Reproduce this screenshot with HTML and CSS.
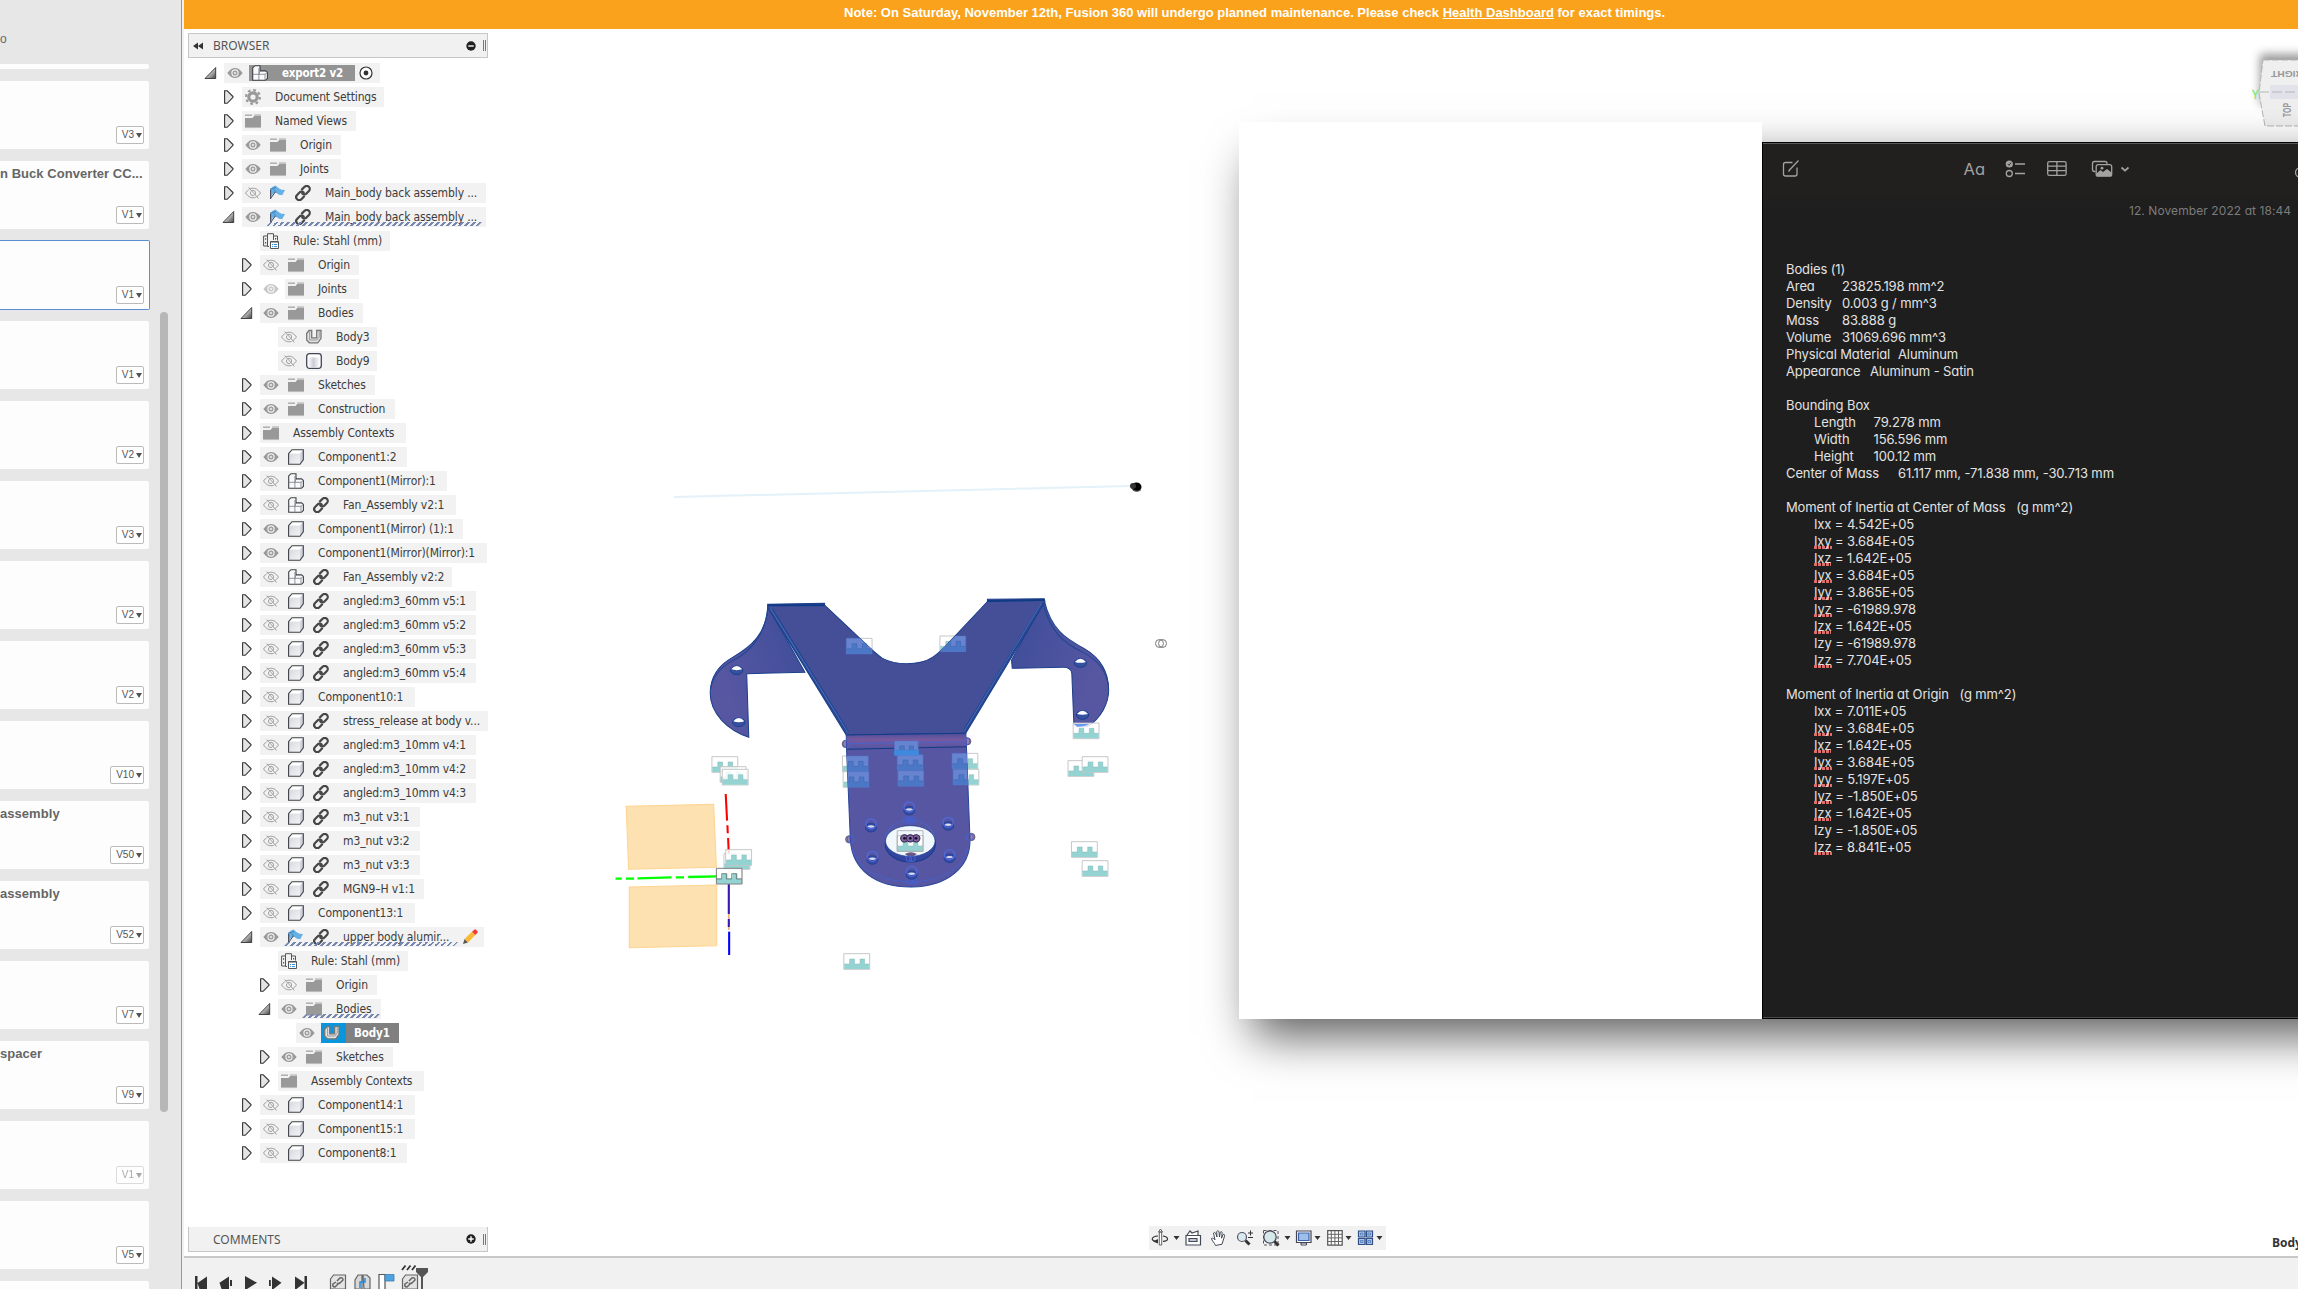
FILE: index.html
```html
<!DOCTYPE html>
<html lang="en">
<head>
<meta charset="utf-8">
<title>Fusion 360</title>
<link rel="stylesheet" href="styles.css">
</head>
<body>
<svg class="defs" width="0" height="0">
  <defs>
    <linearGradient id="gOpen" x1="0" y1="0" x2="1" y2="1"><stop offset="0.3" stop-color="#eee"/><stop offset="1" stop-color="#444"/></linearGradient>
    <linearGradient id="gMetal" x1="0" y1="0" x2="1" y2="0"><stop offset="0" stop-color="#fff"/><stop offset=".45" stop-color="#c9cdd8"/><stop offset="1" stop-color="#fff"/></linearGradient>
    <linearGradient id="gFace" x1="0" y1="0" x2="1" y2="1"><stop offset="0" stop-color="#d7d9de"/><stop offset="1" stop-color="#f3f4f6"/></linearGradient>
  </defs>
  <symbol id="closed" viewBox="0 0 16 16"><path d="M.6 1.800h2.600l5.800 5.700v.8l-5.800 6H.6z" fill="#e4e4e4" stroke="#333" stroke-width="1.1"/></symbol>
  <symbol id="open" viewBox="0 0 16 16" overflow="visible"><path d="M9.700 2.500v11H-1z" fill="url(#gOpen)" stroke="#333" stroke-width=".9"/></symbol>
  <symbol id="eye" viewBox="0 0 16 16"><path d="M.3 8C3 4.300 5.500 3 8 3s5 1.300 7.700 5C13 11.700 10.500 13 8 13S3 11.700.3 8z" fill="#999"/><circle cx="8" cy="8" r="3.100" fill="none" stroke="#f1f1f1" stroke-width="1.200"/><circle cx="8" cy="8" r="1.300" fill="#ddd"/></symbol>
  <symbol id="off" viewBox="0 0 16 16"><path d="M.5 8C3 4.500 5.500 3.200 8 3.200s5 1.300 7.500 4.800C13 11.500 10.500 12.800 8 12.800S3 11.500.5 8zM3.500 2.500l10 11" fill="none" stroke="#a0a0a0"/><circle cx="8" cy="8" r="2.600" fill="none" stroke="#a0a0a0"/><path d="M2.500 2.800l10 11" stroke="#f2f2f2" stroke-width=".8"/></symbol>
  <symbol id="folder" viewBox="0 0 16 16"><path d="M0 5h7.500l2-2.500H16V15H0z" fill="#999"/><path d="M0 2.200h7" stroke="#aaa" stroke-width="1.400"/><path d="M9 1.600h7M0 14.600h16" stroke="#c4c4c4" stroke-width=".9"/></symbol>
  <symbol id="gear" viewBox="0 0 16 16"><circle cx="8" cy="8" r="4.200" fill="none" stroke="#999" stroke-width="3.200"/><circle cx="8" cy="8" r="6.900" fill="none" stroke="#999" stroke-width="2.200" stroke-dasharray="2.700 2.720"/></symbol>
  <symbol id="box" viewBox="0 0 16 16"><path d="M.6 4.500L4 .7h11.300v10.200L12 15.300H.6z" fill="#fff"/><path d="M.8 4.600H12v10.500H.8z" fill="url(#gFace)"/><path d="M12 4.600L15.300.8v10L12 15.200z" fill="#d0d2dc"/><path d="M.6 4.700L4 .7h11.300v10.200L12 15.300H.6z" fill="none" stroke="#3f4046" stroke-width="1.100"/></symbol>
  <symbol id="asm" viewBox="0 0 16 16"><path d="M.7 2.800L3 .7h5v5.200h5.500l1.900 1.500v6l-2.100 1.900H.7z" fill="#fafafb" stroke="#3f4046" stroke-width="1.100"/><path d="M.7 9.300h6.200v6M8 5.900L6.900 9.300H13l2.400-1.900M13 9.300v6M6.900 9.300V3" fill="none" stroke="#777b86" stroke-width=".8"/></symbol>
  <symbol id="link" viewBox="0 0 16 16"><g fill="none" stroke="#464646" stroke-width="2.200" stroke-linecap="round"><path d="M7 4.400l2.600-2.600a2.900 2.900 0 0 1 4.300 4.200L11.500 8.400a2.800 2.800 0 0 1-4.200 0"/><path d="M9 11.500l-2.600 2.700a2.900 2.900 0 0 1-4.300-4.200l2.400-2.400a2.800 2.800 0 0 1 4.200 0"/></g></symbol>
  <symbol id="sheet" viewBox="0 0 16 16"><path d="M0 4.200L3 1.500l2.500-.9 3.300 2.600 2.700 1.500 3.500.2-2.800 5.300-3.300-.5L6 7.500 2.700 9 .8 12.500z" fill="#67b0e6"/><path d="M0 4.200l6-1.600M6 7.500L3.500 4.600" stroke="#3f7fb4" fill="none"/><path d="M.6 14V5M.6 13.500L5.300 7" fill="none" stroke="#445" stroke-width="1"/></symbol>
  <symbol id="rule" viewBox="0 0 16 16"><g fill="none" stroke="#555" stroke-width="1"><path d="M6 13.500H4.500V13H.6V3h3.900V.7h6V3h4v4.500M4.500 3v10M10.500 3v4"/><path d="M2.600 5.200v1.600M2.600 9v1.600M12.600 5v1.500" stroke-width="1.200"/></g><path d="M7.500 8.500h8v7h-8z" fill="#fff" stroke="#555"/><path d="M7.500 9h8" stroke="#555"/><path d="M9 11.500h1.200m.9 0h3M9 13.600h1.200m.9 0h3" stroke="#2a8be0"/></symbol>
  <symbol id="cyl" viewBox="0 0 16 16"><rect x=".7" y=".7" width="14.600" height="14.600" rx="2.800" fill="#fff" stroke="#3f4656" stroke-width="1.300"/><path d="M2 4.500h12v9.800H2z" fill="url(#gMetal)"/></symbol>
  <symbol id="ubody" viewBox="0 0 16 16"><path d="M.7 4.500L3 1.500h2.700v7.300h5V1.500H15v7.800l-3.300 4.500H3.300L.7 11z" fill="#e3e3e3" stroke="#777" stroke-width="1.300"/><path d="M3.600 2.500v8.500h7.200l2.400-3V2.500" fill="none" stroke="#999" stroke-width="1"/></symbol>
  <symbol id="pencil" viewBox="0 0 16 16"><path d="M1 15l1.500-5L6 13.500z" fill="#555"/><path d="M2.500 10L10 2.800l3.300 3.300L6 13.500z" fill="#fbb735"/><path d="M10 2.800L12 .9a1.500 1.500 0 0 1 2.200 0l1 1a1.500 1.500 0 0 1 0 2.200l-1.900 2z" fill="#f23b3b"/></symbol>
  <symbol id="jt" viewBox="0 0 78 50" overflow="visible"><path d="M1 1h75v47H1z" fill="#fff" fill-opacity=".85" stroke="#bcbcbc" stroke-width="2.500"/><path d="M2 47V32h16V17h14v15h16V17h13v15h14v15z" fill="#94d3d2"/><path d="M2 32h16V17h14v15h16V17h13v15h14" fill="none" stroke="#83b9ba" stroke-width="1.500"/></symbol>
  <symbol id="jb" viewBox="0 0 78 50" overflow="visible"><path d="M1 1h75v47H1z" fill="#6684cf" stroke="#5475c6" stroke-width="1.500"/><path d="M2 47V32h16V17h14v15h16V17h13v15h14v15z" fill="#4a78c6"/><path d="M2 32h16V17h14v15h16V17h13v15h14" fill="none" stroke="#3d62ab" stroke-width="1.500"/></symbol>
  <symbol id="hole" viewBox="0 0 36 46" overflow="visible"><ellipse cx="18" cy="28" rx="16" ry="13" fill="#344aa5" stroke="#173f91" stroke-width="2"/><path d="M7 25a12 7 0 0 1 22 0q-11 6-22 0" fill="#d8dcef"/><circle cx="18" cy="17" r="15" fill="none" stroke="#5169da" stroke-width="4"/></symbol>
  <symbol id="whole" viewBox="0 0 40 32" overflow="visible"><ellipse cx="20" cy="17" rx="18" ry="13" fill="#35509f" stroke="#123c8c" stroke-width="2.500"/><path d="M4 14q16-20 32 0-16 5-32 0" fill="#fff"/></symbol>
</svg>

<aside class="data-panel">
  <p class="crumb">o</p>
  <div class="cards">
    <div class="card stub"></div>
    <div class="card"><button class="ver">V3</button></div>
    <div class="card"><h3>n Buck Converter CC...</h3><button class="ver">V1</button></div>
    <div class="card picked"><button class="ver">V1</button></div>
    <div class="card"><button class="ver">V1</button></div>
    <div class="card"><button class="ver">V2</button></div>
    <div class="card"><button class="ver">V3</button></div>
    <div class="card"><button class="ver">V2</button></div>
    <div class="card"><button class="ver">V2</button></div>
    <div class="card"><button class="ver">V10</button></div>
    <div class="card"><h3>assembly</h3><button class="ver">V50</button></div>
    <div class="card"><h3>assembly</h3><button class="ver">V52</button></div>
    <div class="card"><button class="ver">V7</button></div>
    <div class="card"><h3>spacer</h3><button class="ver">V9</button></div>
    <div class="card"><button class="ver faded">V1</button></div>
    <div class="card"><button class="ver">V5</button></div>
    <div class="card"></div>
  </div>
  <div class="scroll-thumb"></div>
</aside>

<main class="work">
  <div class="banner"><span>Note: On Saturday, November 12th, Fusion 360 will undergo planned maintenance. Please check <a>Health Dashboard</a> for exact timings.</span></div>

  <div class="stage">
    <svg class="scene" viewBox="184 29 2114 1227">
      <defs>
        <clipPath id="bodyClip"><path d="M487 103l165-3v5l118 115q30 30 50 45 30 16 70 16 50-1 75-19 15-9 37-32L1125 95v-7l165-2 2 9-230 395 2 40 10 270c6 90-64 150-169 151S732 900 727 810L716 540l-1-45L489 115z"/></clipPath>
        <linearGradient id="fold" x1="0" y1="0" x2="0" y2="1"><stop offset="0" stop-color="#49509b"/><stop offset=".4" stop-color="#77599f"/><stop offset="1" stop-color="#5256a4"/></linearGradient>
        <linearGradient id="wl" x1="0" y1="1" x2="1" y2=".6"><stop offset=".3" stop-color="#5656a1"/><stop offset="1" stop-color="#424f9b"/></linearGradient>
        <linearGradient id="wr" x1="1" y1="1" x2="0" y2=".6"><stop offset=".3" stop-color="#5656a1"/><stop offset="1" stop-color="#424f9b"/></linearGradient>
        <filter id="soft" x="-50%" y="-50%" width="200%" height="200%"><feGaussianBlur stdDeviation="5"/></filter>
      </defs>
      <path d="M674 497l456-11" stroke="#e3f1fb" stroke-width="2"/>
      <ellipse cx="1136.500" cy="487" rx="5" ry="4.500" fill="#000"/><circle cx="1133" cy="486" r="3" fill="#333"/><path d="M1132 489q4 4 9 1" fill="none" stroke="#777"/>
      <g fill="none" stroke="#777"><circle cx="1159.500" cy="643.500" r="4"/><circle cx="1162.500" cy="643.500" r="4"/></g>

      <g transform="translate(600 570) scale(.34439 .33333)">
        <g fill="#fee1b0" stroke="#fdd491" stroke-width="3"><path d="M76 709l254-6 8 189-255 6z"/><path d="M85 951l254-6v182l-254 6z"/></g>
        <g fill="none" stroke-width="6"><path d="M374 840v240" stroke="#e8b27c" stroke-width="5"/><path d="M365 672l4 80m1 14l1 24m1 14l2 50" stroke="#f00"/><path d="M45 926h18m12 0h24m10-1l99-3m12 0h24m12-1l85-2" stroke="#0f0" stroke-width="7"/><path d="M374 942v90m0 15v24" stroke="#3a16b0"/><path d="M375 1085v70" stroke="#00f"/></g>

        <use href="#jt" x="324" y="559" width="78" height="50"/>
        <use href="#jt" x="348" y="589" width="78" height="50"/><use href="#jt" x="354" y="597" width="78" height="50"/>
        <use href="#jt" x="1358" y="571" width="78" height="50"/><use href="#jt" x="1399" y="559" width="78" height="50"/>
        <use href="#jt" x="1368" y="814" width="78" height="50"/><use href="#jt" x="1399" y="871" width="78" height="50"/>
        <use href="#jt" x="707" y="1150" width="78" height="50"/>
        <use href="#jt" x="359" y="850" width="78" height="50"/><use href="#jt" x="364" y="838" width="78" height="50"/>
        <use href="#jt" x="337" y="894" width="78" height="50"/><path d="M338 895h74v47h-74zM338 927h15v-16h14v16h15v-16h14v16h15" fill="none" stroke="#444" stroke-width="2" opacity=".75"/>
        <use href="#jt" x="703" y="557" width="78" height="50"/><use href="#jt" x="705" y="604" width="78" height="50"/>
        <use href="#jt" x="1021" y="549" width="78" height="50"/><use href="#jt" x="1024" y="597" width="78" height="50"/>
        <use href="#jt" x="714" y="204" width="78" height="50"/><use href="#jt" x="986" y="197" width="78" height="50"/>
        <g fill="#9c7fb5" stroke="#444" stroke-width="2"><circle cx="714" cy="522" r="11"/><circle cx="1066" cy="514" r="11"/><circle cx="724" cy="808" r="11"/><circle cx="1078" cy="801" r="11"/></g>

        <path d="M487 108l108 199-169 4 6 191C370 480 320 430 320 370c0-50 25-85 65-108C440 230 484 190 487 108z" fill="url(#wl)" stroke="#1d3f8c" stroke-width="3"/>
        <path d="M488 112C480 190 440 245 385 272c-35 20-58 50-64 85" fill="none" stroke="#1f4692" stroke-width="3"/>
        <path d="M1290 92c20 85 60 113 115 143 45 27 72 65 72 125 0 40-22 85-62 110h-30l-9-8-6-152q-2-18-25-18l-148 3-2-25z" fill="url(#wr)" stroke="#1d3f8c" stroke-width="3"/>
        <path d="M1286 100c22 85 60 120 117 147 45 25 68 58 73 100" fill="none" stroke="#1f4692" stroke-width="3"/>
        <path d="M487 103l165-3v5l118 115q30 30 50 45 30 16 70 16 50-1 75-19 15-9 37-32L1125 95v-7l165-2 2 9-230 395-347 5L489 115z" fill="#444f98" stroke="#1d3f8c" stroke-width="3"/>
        <path d="M490 116L716 488M500 116L722 486M1286 98L1060 486M1278 106L1056 480" fill="none" stroke="#174590" stroke-width="3"/><path d="M495 116L719 486M1282 100L1058 482" stroke="#4668b3" stroke-width="3"/>
        <path d="M487 106h165M1125 93l165-3" stroke="#0f3a85" stroke-width="6"/>
        <path d="M715 495l347-5 2 40 10 270c6 90-64 150-169 151S732 900 727 810l-11-270z" fill="#5656a2" stroke="#2a479c" stroke-width="3"/>
        <path d="M716 495l347-5 1 40-347 7z" fill="url(#fold)"/><path d="M715 495l348-5M718 538l346-8" stroke="#123b83" stroke-width="3"/><path d="M718 521l346-6" stroke="#4b63c8" stroke-width="3"/>
        <path d="M732 835c20 70 90 101 173 100s150-35 165-110" fill="none" stroke="#4860c4" stroke-width="3"/>
        <g fill="none" stroke="#4b63c8" stroke-width="3"><circle cx="716" cy="521" r="10"/><circle cx="1064" cy="514" r="10"/><circle cx="728" cy="808" r="10"/><circle cx="1074" cy="801" r="10"/></g>
        <g clip-path="url(#bodyClip)">
          <use href="#jb" x="703" y="557" width="78" height="50"/><use href="#jb" x="705" y="604" width="78" height="50"/>
          <use href="#jb" x="1021" y="549" width="78" height="50"/><use href="#jb" x="1024" y="597" width="78" height="50"/>
          <use href="#jb" x="714" y="204" width="78" height="50"/><use href="#jb" x="986" y="197" width="78" height="50"/>
          <use href="#jb" x="862" y="553" width="78" height="50"/><use href="#jb" x="864" y="601" width="78" height="50"/>
          <use href="#jb" x="852" y="512" width="76" height="46"/><path d="M854 541h72v15h-72z" fill="#3d8ade"/>
        </g>
        <ellipse cx="901" cy="822" rx="73" ry="54" fill="#33469f" stroke="#1b3b8c" stroke-width="3"/>
        <ellipse cx="901" cy="813" rx="72" ry="46" fill="#f0f8fd" stroke="#1b3b8c" stroke-width="2"/>
        <path d="M828 800c10-30 35-50 72-50s62 20 72 50" fill="none" stroke="#4b63c8" stroke-width="3"/>
        <use href="#jt" x="862" y="796" width="78" height="50"/><path d="M863 782h75v62h-75z" fill="none" stroke="#9a9a9a" stroke-width="2"/>
        <g fill="#8463a8" stroke="#2b2340" stroke-width="3"><circle cx="884" cy="805" r="11"/><circle cx="918" cy="805" r="11"/><circle cx="901" cy="805" r="11"/></g><g fill="#15101f"><circle cx="884" cy="805" r="4"/><circle cx="901" cy="805" r="4"/><circle cx="918" cy="805" r="4"/></g>
        <path d="M885 852q18-10 35 0l-8 6h-18z" fill="#6b5880"/>
        <g fill="none" stroke="#4560d0" stroke-width="3"><circle cx="889" cy="750" r="9"/><circle cx="899" cy="750" r="9"/><circle cx="909" cy="750" r="9"/><circle cx="897" cy="866" r="8"/><circle cx="907" cy="866" r="8"/><circle cx="899" cy="933" r="9"/><circle cx="912" cy="933" r="9"/></g>
        <use href="#hole" x="880" y="694" width="36" height="46"/><use href="#hole" x="769" y="745" width="36" height="46"/><use href="#hole" x="993" y="740" width="36" height="46"/><use href="#hole" x="773" y="842" width="36" height="46"/><use href="#hole" x="997" y="837" width="36" height="46"/><use href="#hole" x="887" y="887" width="36" height="46"/>
        <use href="#whole" x="377" y="284" width="40" height="32"/><use href="#whole" x="383" y="440" width="40" height="32"/><use href="#whole" x="1375" y="262" width="40" height="32"/><use href="#whole" x="1381" y="418" width="40" height="32"/>
        <use href="#jt" x="1373" y="458" width="78" height="50"/><path d="M1376 462h44q-12 8-34 8z" fill="#6a9af0"/>
      </g>

      <g class="cube">
        <path d="M2260 54h60v50h-60z" fill="#777" filter="url(#soft)" opacity=".75"/>
        <path d="M2263 60h40v66h-38l-6-33z" fill="#efefef" stroke="#b5b5b5" stroke-dasharray="7 2"/>
        <path d="M2270 85h30v14h-30z" fill="#e2e3ea"/><path d="M2259 92h39" stroke="#b5b5b5" stroke-dasharray="10 3"/>
        <text transform="translate(2303 71) rotate(180)" font-size="9.500" textLength="32" lengthAdjust="spacingAndGlyphs">RIGHT</text>
        <text transform="translate(2291 117) rotate(-90)" font-size="11" textLength="14" lengthAdjust="spacingAndGlyphs">TOP</text>
        <text x="2252" y="99" class="axis" textLength="6.500" lengthAdjust="spacingAndGlyphs">Y</text>
      </g>
    </svg>

    <section class="palette">
      <header class="bar"><svg class="rew" viewBox="0 0 10 8"><path d="M5 .5v7L0 4zM10 .5v7L5 4z" fill="#333"/></svg><span class="bar-title">BROWSER</span><svg class="round" viewBox="0 0 10 10"><circle cx="5" cy="5" r="4.700" fill="#222"/><path d="M2.300 5h5.400" stroke="#fff" stroke-width="1.400"/></svg><i class="grip"></i></header>
      <ul class="tree">
        <li class="l0"><svg><use href="#open"/></svg><div class="pill w156"><svg><use href="#eye"/></svg><span class="root"><svg><use href="#asm"/></svg><b>export2 v2</b></span><svg class="radio" viewBox="0 0 14 14"><circle cx="7" cy="7" r="6" fill="#fff" stroke="#333" stroke-width="1.200"/><circle cx="7" cy="7" r="2.400" fill="#333"/></svg></div></li>
        <li class="l1"><svg><use href="#closed"/></svg><div class="pill w142"><svg><use href="#gear"/></svg><span>Document Settings</span></div></li>
        <li class="l1"><svg><use href="#closed"/></svg><div class="pill w114"><svg><use href="#folder"/></svg><span>Named Views</span></div></li>
        <li class="l1"><svg><use href="#closed"/></svg><div class="pill w99"><svg><use href="#eye"/></svg><svg><use href="#folder"/></svg><span>Origin</span></div></li>
        <li class="l1"><svg><use href="#closed"/></svg><div class="pill w99"><svg><use href="#eye"/></svg><svg><use href="#folder"/></svg><span>Joints</span></div></li>
        <li class="l1"><svg><use href="#closed"/></svg><div class="pill w244"><svg><use href="#off"/></svg><svg><use href="#sheet"/></svg><svg><use href="#link"/></svg><span>Main_body back assembly ...</span></div></li>
        <li class="l1"><svg><use href="#open"/></svg><div class="pill w244 hatch"><svg><use href="#eye"/></svg><svg><use href="#sheet"/></svg><svg><use href="#link"/></svg><span>Main_body back assembly ...</span></div></li>
        <li class="l2"><svg></svg><div class="pill w130"><svg><use href="#rule"/></svg><span>Rule: Stahl (mm)</span></div></li>
        <li class="l2"><svg><use href="#closed"/></svg><div class="pill w99"><svg><use href="#off"/></svg><svg><use href="#folder"/></svg><span>Origin</span></div></li>
        <li class="l2"><svg><use href="#closed"/></svg><div class="pill w99 dim"><svg><use href="#eye"/></svg><svg><use href="#folder"/></svg><span>Joints</span></div></li>
        <li class="l2"><svg><use href="#open"/></svg><div class="pill w103"><svg><use href="#eye"/></svg><svg><use href="#folder"/></svg><span>Bodies</span></div></li>
        <li class="l3"><svg></svg><div class="pill w99"><svg><use href="#off"/></svg><svg><use href="#ubody"/></svg><span>Body3</span></div></li>
        <li class="l3"><svg></svg><div class="pill w99"><svg><use href="#off"/></svg><svg><use href="#cyl"/></svg><span>Body9</span></div></li>
        <li class="l2"><svg><use href="#closed"/></svg><div class="pill w115"><svg><use href="#eye"/></svg><svg><use href="#folder"/></svg><span>Sketches</span></div></li>
        <li class="l2"><svg><use href="#closed"/></svg><div class="pill w135"><svg><use href="#eye"/></svg><svg><use href="#folder"/></svg><span>Construction</span></div></li>
        <li class="l2"><svg><use href="#closed"/></svg><div class="pill w146"><svg><use href="#folder"/></svg><span>Assembly Contexts</span></div></li>
        <li class="l2"><svg><use href="#closed"/></svg><div class="pill w147"><svg><use href="#eye"/></svg><svg><use href="#box"/></svg><span>Component1:2</span></div></li>
        <li class="l2"><svg><use href="#closed"/></svg><div class="pill w187"><svg><use href="#off"/></svg><svg><use href="#asm"/></svg><span>Component1(Mirror):1</span></div></li>
        <li class="l2"><svg><use href="#closed"/></svg><div class="pill w196"><svg><use href="#off"/></svg><svg><use href="#asm"/></svg><svg><use href="#link"/></svg><span>Fan_Assembly v2:1</span></div></li>
        <li class="l2"><svg><use href="#closed"/></svg><div class="pill w203"><svg><use href="#eye"/></svg><svg><use href="#box"/></svg><span>Component1(Mirror) (1):1</span></div></li>
        <li class="l2"><svg><use href="#closed"/></svg><div class="pill w227"><svg><use href="#eye"/></svg><svg><use href="#box"/></svg><span>Component1(Mirror)(Mirror):1</span></div></li>
        <li class="l2"><svg><use href="#closed"/></svg><div class="pill w192"><svg><use href="#off"/></svg><svg><use href="#asm"/></svg><svg><use href="#link"/></svg><span>Fan_Assembly v2:2</span></div></li>
        <li class="l2"><svg><use href="#closed"/></svg><div class="pill w216"><svg><use href="#off"/></svg><svg><use href="#box"/></svg><svg><use href="#link"/></svg><span>angled:m3_60mm v5:1</span></div></li>
        <li class="l2"><svg><use href="#closed"/></svg><div class="pill w216"><svg><use href="#off"/></svg><svg><use href="#box"/></svg><svg><use href="#link"/></svg><span>angled:m3_60mm v5:2</span></div></li>
        <li class="l2"><svg><use href="#closed"/></svg><div class="pill w216"><svg><use href="#off"/></svg><svg><use href="#box"/></svg><svg><use href="#link"/></svg><span>angled:m3_60mm v5:3</span></div></li>
        <li class="l2"><svg><use href="#closed"/></svg><div class="pill w216"><svg><use href="#off"/></svg><svg><use href="#box"/></svg><svg><use href="#link"/></svg><span>angled:m3_60mm v5:4</span></div></li>
        <li class="l2"><svg><use href="#closed"/></svg><div class="pill w155"><svg><use href="#off"/></svg><svg><use href="#box"/></svg><span>Component10:1</span></div></li>
        <li class="l2"><svg><use href="#closed"/></svg><div class="pill w228"><svg><use href="#off"/></svg><svg><use href="#box"/></svg><svg><use href="#link"/></svg><span>stress_release at body v...</span></div></li>
        <li class="l2"><svg><use href="#closed"/></svg><div class="pill w216"><svg><use href="#off"/></svg><svg><use href="#box"/></svg><svg><use href="#link"/></svg><span>angled:m3_10mm v4:1</span></div></li>
        <li class="l2"><svg><use href="#closed"/></svg><div class="pill w216"><svg><use href="#off"/></svg><svg><use href="#box"/></svg><svg><use href="#link"/></svg><span>angled:m3_10mm v4:2</span></div></li>
        <li class="l2"><svg><use href="#closed"/></svg><div class="pill w216"><svg><use href="#off"/></svg><svg><use href="#box"/></svg><svg><use href="#link"/></svg><span>angled:m3_10mm v4:3</span></div></li>
        <li class="l2"><svg><use href="#closed"/></svg><div class="pill w160"><svg><use href="#off"/></svg><svg><use href="#box"/></svg><svg><use href="#link"/></svg><span>m3_nut v3:1</span></div></li>
        <li class="l2"><svg><use href="#closed"/></svg><div class="pill w160"><svg><use href="#off"/></svg><svg><use href="#box"/></svg><svg><use href="#link"/></svg><span>m3_nut v3:2</span></div></li>
        <li class="l2"><svg><use href="#closed"/></svg><div class="pill w160"><svg><use href="#off"/></svg><svg><use href="#box"/></svg><svg><use href="#link"/></svg><span>m3_nut v3:3</span></div></li>
        <li class="l2"><svg><use href="#closed"/></svg><div class="pill w164"><svg><use href="#off"/></svg><svg><use href="#box"/></svg><svg><use href="#link"/></svg><span>MGN9–H v1:1</span></div></li>
        <li class="l2"><svg><use href="#closed"/></svg><div class="pill w155"><svg><use href="#off"/></svg><svg><use href="#box"/></svg><span>Component13:1</span></div></li>
        <li class="l2"><svg><use href="#open"/></svg><div class="pill w224 hatch edit"><svg><use href="#eye"/></svg><svg><use href="#sheet"/></svg><svg><use href="#link"/></svg><span>upper body alumir...</span><svg class="pen"><use href="#pencil"/></svg></div></li>
        <li class="l3"><svg></svg><div class="pill w130"><svg><use href="#rule"/></svg><span>Rule: Stahl (mm)</span></div></li>
        <li class="l3"><svg><use href="#closed"/></svg><div class="pill w99"><svg><use href="#off"/></svg><svg><use href="#folder"/></svg><span>Origin</span></div></li>
        <li class="l3"><svg><use href="#open"/></svg><div class="pill w103 hatch tight"><svg><use href="#eye"/></svg><svg><use href="#folder"/></svg><span>Bodies</span></div></li>
        <li class="l4"><svg></svg><div class="pill w103 chosen"><svg><use href="#eye"/></svg><svg><use href="#ubody"/></svg><b>Body1</b></div></li>
        <li class="l3"><svg><use href="#closed"/></svg><div class="pill w115"><svg><use href="#eye"/></svg><svg><use href="#folder"/></svg><span>Sketches</span></div></li>
        <li class="l3"><svg><use href="#closed"/></svg><div class="pill w146"><svg><use href="#folder"/></svg><span>Assembly Contexts</span></div></li>
        <li class="l2"><svg><use href="#closed"/></svg><div class="pill w155"><svg><use href="#off"/></svg><svg><use href="#box"/></svg><span>Component14:1</span></div></li>
        <li class="l2"><svg><use href="#closed"/></svg><div class="pill w155"><svg><use href="#off"/></svg><svg><use href="#box"/></svg><span>Component15:1</span></div></li>
        <li class="l2"><svg><use href="#closed"/></svg><div class="pill w147"><svg><use href="#off"/></svg><svg><use href="#box"/></svg><span>Component8:1</span></div></li>
      </ul>
      <footer class="bar comments"><span class="bar-title">COMMENTS</span><svg class="round" viewBox="0 0 10 10"><circle cx="5" cy="5" r="4.700" fill="#222"/><path d="M2.300 5h5.400M5 2.300v5.400" stroke="#fff" stroke-width="1.400"/></svg><i class="grip"></i></footer>
    </section>

    <svg class="navbar" viewBox="0 0 237 24">
      <path d="M0 0h237v24H0z" fill="#f1f1f1"/>
      <g fill="none" stroke="#333" stroke-width="1.200"><path d="M10.300 19V6h2.400v13zM11.500 3l-2 3h4z" fill="#fff" stroke="#555" stroke-width=".9"/><path d="M9 10C2 10.500 1 15 8 15.500M14 10c6 1 6 5 0 5.300"/><path d="M9 13l-5 2.500 5 2" fill="#333" stroke="none"/>
      <path d="M37 9.500h14.500V19H37zM38 9l3-4 2 2 6-2v4" fill="#fff" stroke="#444a55"/><path d="M40 12.500h8v3h-8z" fill="#bfc5d2" stroke="#444a55"/>
      <path d="M66.500 19.500c-1-3-4-5-4-7 1.500-1 2.500.5 3.500 1.500L64.500 7c1-1.300 2-.5 2.500 1l1 3-.3-5.500c1-1.300 2-.8 2.300.5l.5 5 .8-4.800c1-1 2-.5 1.800 1l-.6 5 1.500-3.500c1-.8 2 0 1.500 1.500l-2.500 8z" fill="#fff" stroke="#444a55" stroke-width="1"/>
      <circle cx="93" cy="11" r="4.500" fill="#d8e8ee" stroke="#556"/><path d="M96.500 14.500l4 4" stroke="#333" stroke-width="3"/><path d="M99 7h5m-2.500-2.500v5m-2.500 2h5" stroke="#333" stroke-width="1"/>
      <path d="M114.500 4.500h14.500v14.500h-14.500z" stroke="#555" stroke-width="1" stroke-dasharray="3 2"/><circle cx="121" cy="11" r="6.200" fill="#d5e9ea" stroke="#445"/><path d="M125.500 15.500l4 4" stroke="#333" stroke-width="3"/>
      <path d="M147.500 5h14.500v11.500h-14.500z" fill="#fff" stroke="#445"/><path d="M149.500 7h10.500v7.500h-10.500z" fill="#9cc0ea" stroke="#3c62a8"/><path d="M152 17h5.500v2H152z" fill="#fff" stroke="#445" stroke-width="1"/>
      <path d="M178.700 4.700h14.500v14.500h-14.500z" fill="#fff" stroke="#555"/><path d="M182.300 5v14m3.600-14v14m3.600-14v14M179 8.300h14m-14 3.600h14m-14 3.600h14" stroke="#666" stroke-width="1"/>
      <path d="M209.500 5h6.500v6h-6.500zM217.500 5h6v6h-6zM209.500 12.500h6.500v6h-6.500zM217.500 12.500h6v6h-6z" fill="#a9c8ec" stroke="#2f4f86"/><path d="M211.500 7h2.500v2h-2.500zM219 7h2.500v2H219zM211.500 14.500h2.500v2h-2.500zM219 14.500h2.500v2H219z" stroke="#4c74b5" stroke-width=".8"/></g>
      <path d="M24.500 10h6l-3 4zM135.500 10h6l-3 4zM165.500 10h6l-3 4zM196.500 10h6l-3 4zM227.500 10h6l-3 4z" fill="#333"/>
    </svg>
    <b class="status">Body</b>

    <section class="window">
      <div class="blank"></div>
      <article class="notes">
        <svg class="tools" viewBox="1762 142 536 57" fill="none" stroke="#a3a2a0" stroke-width="1.300">
          <path d="M1792.500 162.500h-7q-2 0-2 2v9.500q0 2 2 2h9.500q2 0 2-2v-6.500M1789 170.500l9.500-10M1788.500 171.500l1.500-2"/>
          <text x="1963.500" y="174.500">Aa</text>
          <circle cx="2009.300" cy="164" r="3.600" fill="#a3a2a0" stroke="none"/><path d="M2007.800 164l1.200 1.300 2-2.800" stroke="#21201e" stroke-width=".9"/><circle cx="2009.300" cy="173.500" r="3"/><path d="M2015 164h10m-10 9.500h10"/>
          <rect x="2047.700" y="161.700" width="18.400" height="13.600" rx="1.600"/><path d="M2047.700 166.200h18.400m-18.400 4.500h18.400m-9.200-9v13.600"/>
          <path d="M2095.500 171.500h-1q-2 0-2-2v-6q0-2 2-2h10.500q2 0 2 2v1"/><rect x="2096.200" y="164.700" width="15.500" height="11.500" rx="2"/><path d="M2096.500 173.500l4-3.500 2.500 2 4-3 4.500 3.500v3.700h-15z" fill="#a3a2a0" stroke="none"/><circle cx="2102" cy="168.200" r="1.400" fill="#a3a2a0" stroke="none"/>
          <path d="M2121.500 167.500l3.500 3.200 3.500-3.200" stroke-width="1.700"/><circle cx="2300" cy="172.500" r="4.500"/>
        </svg>
        <time>12. November 2022 at 18:44</time>
<pre>Bodies (1)
Area&#9;23825.198 mm^2
Density&#9;0.003 g / mm^3
Mass&#9;83.888 g
Volume&#9;31069.696 mm^3
Physical Material&#9;Aluminum
Appearance&#9;Aluminum - Satin

Bounding Box
&#9;Length&#9; 79.278 mm
&#9;Width&#9; 156.596 mm
&#9;Height&#9; 100.12 mm
Center of Mass&#9;61.117 mm, -71.838 mm, -30.713 mm

Moment of Inertia at Center of Mass   (g mm^2)
&#9;Ixx = 4.542E+05
&#9;<u>Ixy</u> = 3.684E+05
&#9;<u>Ixz</u> = 1.642E+05
&#9;<u>Iyx</u> = 3.684E+05
&#9;<u>Iyy</u> = 3.865E+05
&#9;<u>Iyz</u> = -61989.978
&#9;<u>Izx</u> = 1.642E+05
&#9;Izy = -61989.978
&#9;<u>Izz</u> = 7.704E+05

Moment of Inertia at Origin   (g mm^2)
&#9;Ixx = 7.011E+05
&#9;<u>Ixy</u> = 3.684E+05
&#9;<u>Ixz</u> = 1.642E+05
&#9;<u>Iyx</u> = 3.684E+05
&#9;<u>Iyy</u> = 5.197E+05
&#9;<u>Iyz</u> = -1.850E+05
&#9;<u>Izx</u> = 1.642E+05
&#9;Izy = -1.850E+05
&#9;<u>Izz</u> = 8.841E+05</pre>
      </article>
    </section>
  </div>

  <footer class="timeline">
    <svg viewBox="184 1258 300 31">
      <g fill="#333"><path d="M195 1276h2.500v13H195zM207 1276.500v12.500h-7.500l-2-6zM229 1276.500v12.500h-7.500l-2-6.300zM230 1280h2v6h-2zM245 1276l12 6.700-10 6.300h-2zM269 1280h1.800v6H269zM272 1276.500l9.500 6.300-8 6.200H272zM295 1276.500l9.500 6.300-8 6.200H295zM304.500 1276h2.500v13h-2.500z"/></g>
      <g fill="#e3e3e3" stroke="#666" stroke-width="1.200"><path d="M330.500 1279l3-4h12v14h-15z"/><path d="M402.500 1279l3-4h12v14h-15z"/></g>
      <g fill="none" stroke="#666" stroke-width="1.500"><path d="M337 1281l3-3q3-1 3 2l-3 3q-2 1-3 0M338 1284l-3 3q-3 0-2-3l3-2"/><path d="M409 1281l3-3q3-1 3 2l-3 3q-2 1-3 0M410 1284l-3 3q-3 0-2-3l3-2"/></g>
      <path d="M355 1289v-9l3-5h4v14zM363 1275h4l3 3v11h-6z" fill="#d8d8d8" stroke="#666" stroke-width="1.200"/><path d="M360 1288v-6h5v-4" fill="none" stroke="#2a8be0" stroke-width="1.500"/>
      <path d="M379 1289v-14.500h6V1289" fill="#fff" stroke="#555" stroke-width="1.200"/><path d="M385 1274.500h9v6.500h-9z" fill="#4fa3e0" stroke="#3b7db0" stroke-width=".8"/>
      <path d="M402 1270l3.500-4.500m1.500 4.500l3.500-4.500m1.500 4.500l3.500-4.500" stroke="#333" stroke-width="1.800"/>
      <path d="M416 1268h12v4l-5 5v12h-2v-12l-5-5z" fill="#555"/>
    </svg>
  </footer>
</main>
</body>
</html>
```
FILE: styles.css
```css
* { box-sizing: border-box; }
body { margin: 0; width: 2298px; height: 1289px; overflow: hidden; display: flex; background: #fff; font-family: "DejaVu Sans Condensed", "DejaVu Sans", sans-serif; }
.defs { position: absolute; }
h3, p, ul, pre { margin: 0; padding: 0; }

/* Data panel */
.data-panel { position: relative; width: 184px; flex: none; height: 1289px; overflow: hidden; background: #e7e7e7; border-right: 2px solid #f1f1f1; box-shadow: inset -1px 0 #999; font-family: "Liberation Sans", Arial, sans-serif; }
.crumb { height: 64px; padding-top: 32px; font-size: 12px; line-height: 14px; color: #666; }
.cards { display: flex; flex-direction: column; gap: 12px; width: 149px; }
.card { height: 68px; flex: none; background: #fdfdfd; border-radius: 0 2px 2px 0; display: flex; flex-direction: column; align-items: flex-end; padding: 5px 5px 5px 0; }
.card.stub { height: 5px; padding: 0; }
.card.picked { margin-right: -1px; margin-top: -1px; height: 70px; margin-bottom: -1px; padding: 5px; border: 1px solid #5b8fd0; border-left: 0; }
.card h3 { align-self: flex-start; font-size: 13px; line-height: 15px; color: #666; white-space: nowrap; letter-spacing: .05px; }
.ver { margin-top: auto; height: 18px; border: 1px solid #bbb; border-radius: 2px; background: #fff; padding: 0 1px 0 5px; display: flex; align-items: center; gap: 2px; font: 10px/16px "Liberation Sans", Arial, sans-serif; color: #555; }
.ver::after { content: ""; border: 3.500px solid transparent; border-top: 5px solid #555; border-bottom: 0; }
.ver.faded { opacity: .5; }
.scroll-thumb { position: absolute; left: 160px; top: 312px; width: 8px; height: 800px; border-radius: 4px; background: #b7b7b7; }

/* Work area */
.work { flex: 1; min-width: 0; display: flex; flex-direction: column; }
.banner { height: 29px; background: #faa21b; color: #fff; padding-left: 660px; font: bold 13px/26px "Liberation Sans", Arial, sans-serif; white-space: nowrap; }
.banner a { text-decoration: underline; }
.stage { position: relative; height: 1227px; overflow: hidden; }
.scene { position: absolute; inset: 0; width: 2114px; height: 1227px; }
.cube text { font-family: "Liberation Sans", sans-serif; font-weight: bold; fill: #999; }
.cube .axis { font-size: 13px; font-weight: normal; fill: #7bea7b; stroke: #7bea7b; stroke-width: .5; }

.palette { position: relative; width: 304px; height: 1227px; padding: 4px 0 4px 4px; display: flex; flex-direction: column; }
.bar { width: 300px; height: 25px; flex: none; border: 1px solid #c6c6c6; background: #f1f1f1; display: flex; align-items: center; padding: 0 1px 0 4px; color: #555; font: 12px/23px "Noto Sans", sans-serif; }
.rew { width: 10px; height: 8px; margin-right: 10px; }
.bar-title { flex: 1; }
.round { width: 10px; height: 10px; margin-right: 7px; }
.grip { width: 3px; height: 11px; border: solid #777; border-width: 0 1px; }
.comments { margin-top: auto; border-top: 0; padding-left: 24px; }

/* Browser tree */
.tree { list-style: none; padding-top: 3px; font-size: 12px; color: #3c3c3c; }
.tree li { height: 24px; display: flex; align-items: center; }
.tree svg { width: 16px; height: 16px; flex: none; }
.tree li > svg { margin-right: 2px; overflow: visible; }
.tree .l0 { padding-left: 18px; }
.tree .l1 { padding-left: 36px; }
.tree .l2 { padding-left: 54px; }
.tree .l3 { padding-left: 72px; }
.tree .l4 { padding-left: 90px; }
.pill { position: relative; height: 20px; display: flex; align-items: center; padding-left: 3px; gap: 9px; background: #f2f2f2; white-space: nowrap; line-height: 20px; }
.pill > span:not(.root), .pill > b { margin-left: 5px; letter-spacing: -.12px; }
.pill > svg + b { margin-left: 5px; font-size: 11.500px; }
.root { display: flex; align-items: center; height: 16px; width: 106px; margin-left: -3px; padding-left: 3px; gap: 14px; background: #939393; color: #fff; font-size: 11.500px; line-height: 16px; letter-spacing: -.2px; }
.pill .radio { width: 14px; height: 14px; margin-left: -5px; }
.dim { background: linear-gradient(90deg, #fff 25px, #f2f2f2 25px); }
.dim svg:first-child { opacity: .55; }
.chosen { background: linear-gradient(90deg, #f2f2f2 25px, #0a96dc 25px, #0a96dc 50px, #808080 50px); color: #fff; }
.pill .pen { margin-left: auto; margin-right: 6px; }
.hatch::after { content: ""; position: absolute; left: 26px; right: 6px; bottom: 1px; height: 4px; background: repeating-linear-gradient(90deg, #7688b0 0 2.500px, transparent 2.500px 6px); transform: skewX(-45deg); }
.hatch.edit::after { right: 28px; }
.hatch.tight::after { right: 3px; }
.w99 { width: 99px; } .w103 { width: 103px; } .w114 { width: 114px; } .w115 { width: 115px; }
.w130 { width: 130px; } .w135 { width: 135px; } .w142 { width: 142px; } .w146 { width: 146px; }
.w147 { width: 147px; } .w155 { width: 155px; } .w156 { width: 156px; } .w160 { width: 160px; }
.w164 { width: 164px; } .w187 { width: 187px; } .w192 { width: 192px; } .w196 { width: 196px; }
.w203 { width: 203px; } .w216 { width: 216px; } .w224 { width: 224px; } .w227 { width: 227px; }
.w228 { width: 228px; } .w244 { width: 244px; }

.navbar { position: absolute; left: 965px; top: 1197px; width: 237px; height: 24px; }
.status { position: absolute; left: 2088px; top: 1206px; font: bold 12px/16px "Open Sans", sans-serif; color: #333; }

/* Notes window */
.window { position: absolute; left: 1055px; top: 113px; width: 1200px; height: 877px; display: flex; box-shadow: 14px 17px 44px rgba(0, 0, 0, .64); }
.blank { width: 523px; height: 897px; margin-top: -20px; background: #fff; flex: none; }
.notes { flex: 1; background: #1e1e1e linear-gradient(#21201e 50px, #1e1e1e 62px); border: 1px solid #000; box-shadow: inset 0 1px #5a5a5a, inset 0 -1px #4a4a4a; color: #e2e2e2; font-family: Inter, sans-serif; font-feature-settings: "cv11"; }
.tools { display: block; width: 536px; height: 57px; margin: -1px 0 0 -1px; }
.tools text { font-size: 16.500px; fill: #a3a2a0; stroke: none; }
.notes time { display: block; margin: 4px 0 0 366px; font-size: 12px; line-height: 16px; color: #7c7c7c; white-space: nowrap; letter-spacing: .08px; }
.notes pre { margin: 42px 0 0 23px; font: 13px/17px Inter, sans-serif; font-feature-settings: "cv11"; tab-size: 28px; letter-spacing: -.12px; }
.notes u { text-decoration: none; background: radial-gradient(circle at 1.500px 1.500px, #e0706c 1.400px, transparent 1.700px) 0 100% / 4px 3px repeat-x; }

.timeline { height: 33px; border-top: 2px solid #c9c9c9; background: #f1f1f1; overflow: hidden; }
.timeline svg { display: block; width: 300px; height: 31px; }
```
